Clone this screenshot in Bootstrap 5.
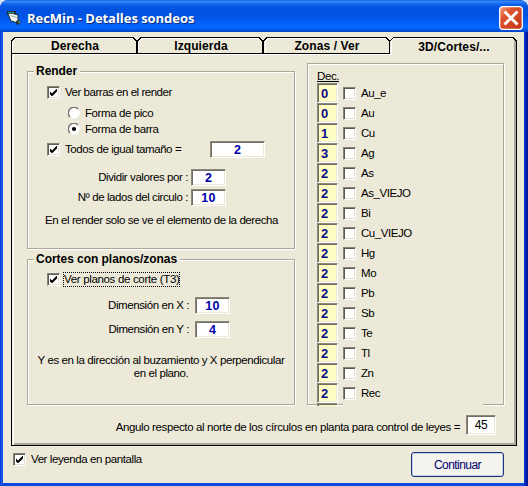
<!DOCTYPE html>
<html lang="es">
<head>
<meta charset="utf-8">
<meta name="viewport" content="width=device-width, initial-scale=1">
<title>RecMin - Detalles sondeos</title>
<link href="https://cdn.jsdelivr.net/npm/bootstrap@5.3.0/dist/css/bootstrap.min.css" rel="stylesheet">
<style>
  body { background: #d9e4f4; }
  .xp-window { width: 528px; height: 486px; border-radius: 8px 8px 0 0; padding: 0 4px 3px 3px;
    background: linear-gradient(90deg, #0831d9 0, #1f5fee 2px, #0a48e0 3px, #0a48e0 524px, #0024b8 525px, #001590 528px);
    font: 11.5px/13px "Liberation Sans", Arial, sans-serif; letter-spacing: -.41px; color: #000; }
  .xp-title { height: 32px; margin: 0 -4px 0 -3px; padding: 3px 5px 0 6px; border-radius: 8px 8px 0 0;
    background: linear-gradient(#0a4fd0 0, #3a8cf8 1px, #2173f5 3px, #0a5be8 5px, #0353e1 9px, #0054e3 16px, #0461f8 23px, #0567ff 28px, #0252dd 30px, #0346cc 32px); }
  .xp-title h1 { font: bold 13px/18px "Open Sans", "Noto Sans", sans-serif; letter-spacing: -.04px; color: #fff; text-shadow: 1px 1px 1px #0a2a80; padding-left: 5px; }
  .xp-client { height: 451px; background: #ece9d8; padding: 5px 7px 0 8px; }
  .tab-strip { height: 18px; width: 506px; }
  .tab-strip svg { position: absolute; left: 0; top: 0; }
  .tab-strip .tab-name { position: relative; width: 126px; padding: 3px 0 0 2px; text-align: center; font-weight: bold; font-size: 12px; letter-spacing: .1px; }
  .tab-strip .tab-name.current { padding: 4px 0 0 4px; }
  .tab-panel { width: 506px; height: 391px; border: solid #000; border-width: 0 1px 1px 1px; box-shadow: inset 1px 0 0 #ece9d8, inset 2px 0 0 #fff, inset -2px -2px 0 #aca899; padding-left: 15px; }
  .etched { position: relative; border: 1px solid #aca899; box-shadow: 1px 1px 0 #fff, inset 1px 1px 0 #fff; }
  .legend-text { position: absolute; left: 6px; top: -8px; padding: 0 3px 0 2px; background: #ece9d8; font-weight: bold; font-size: 12px; line-height: 15px; letter-spacing: -.04px; }
  .g-render { width: 268px; height: 178px; margin-top: 16px; padding-top: 10px; }
  .g-cortes { width: 268px; height: 146px; margin-top: 10px; padding-top: 9px; }
  .g-elem { width: 197px; height: 342px; margin: 8px 0 0 12px; padding: 6px 0 0 9px; }
  .g-elem .gap-cover { position: absolute; left: 35px; bottom: -2px; width: 140px; height: 3px; background: #ece9d8; }
  .line { height: 20px; display: flex; align-items: center; white-space: nowrap; }
  .line-sm { height: 16px; }
  .in-check { padding-left: 19px; }
  .in-radio { padding-left: 40px; }
  .in-note { padding-left: 17px; }
  .top-2 { margin-top: 2px; }
  .top-3 { margin-top: 3px; }
  .top-4 { margin-top: 4px; }
  .top-6 { margin-top: 6px; }
  .top-8 { margin-top: 8px; }
  .tag { margin-left: 5px; }
  .tag-first { letter-spacing: -.47px; }
  .tag-wide { width: 145px; }
  .box { flex: none; width: 13px; height: 13px; background: #fff; border: 1px solid; border-color: #848478 #fff #fff #848478; box-shadow: inset 1px 1px 0 #5c5b52, inset -1px -1px 0 #e4e1d2; display: block; }
  .box svg { display: block; margin: 2px 0 0 2px; }
  .field { flex: none; background: #fff; border: 1px solid; border-color: #8c897a #fff #fff #8c897a; box-shadow: inset 1px 1px 0 #716f64, inset -1px -1px 0 #ece9d8; height: 17px; width: 35px; padding-top: 1px; text-align: center; color: #0000a8; font-weight: bold; font-size: 12.5px; line-height: 15px; letter-spacing: .2px; }
  .field.wide { width: 55px; }
  .field.plain { height: 20px; width: 30px; color: #000; font-weight: normal; font-size: 12px; line-height: 16px; letter-spacing: -.4px; }
  .dec { flex: none; width: 21px; height: 20px; background: #ffffc4; border: 1px solid; border-color: #8c897a #fff #fff #8c897a; box-shadow: inset 1px 1px 0 #716f64, inset -1px -1px 0 #ece9d8; padding: 1px 0 0 3px; color: #0a0a88; font-weight: bold; font-size: 13px; line-height: 17px; }
  .dec.cut { height: 3px; border-bottom: 0; box-shadow: inset 1px 1px 0 #716f64; padding: 0; }
  .dec + .box { margin-left: 5px; }
  .el-name { padding: 1px 0 0 5px; letter-spacing: -.45px; }
  .focus-dots { outline: 1px dotted #000; letter-spacing: -.33px; }
  .lbl { text-align: right; width: 163px; padding-right: 3px; }
  .lbl.far { width: 167px; padding-right: 6px; }
  .note { margin-top: 15px; letter-spacing: -.4px; }
  .angle-row { margin: 10px 20px 0 0; }
  .angle-row .angle-text { padding: 4px 6px 0 0; letter-spacing: -.37px; }
  .bottom-bar { padding: 3px 13px 0 2px; }
  .btn-xp { width: 93px; height: 25px; margin-top: 3px; padding: 0; font-size: 12px; letter-spacing: -.55px; line-height: 22px; color: #00006c; background: #f4f3ee; border: 1px solid #1c2f7c; border-radius: 3px; box-shadow: inset 0 0 0 1px #c6d0e6; }
</style>
</head>
<body>
<svg width="0" height="0" class="position-absolute">
  <symbol id="tick" viewBox="0 0 7 7"><path d="M0 2v3l2 2 5-5V-1L2 4z" transform="translate(0 .4)" fill="#000"/></symbol>
  <symbol id="ring" viewBox="0 0 12 12"><circle cx="6" cy="6" r="5.3" fill="#fff" stroke="#fff"/><path d="M2 10A5.500 5.500 0 0 1 10 2" fill="none" stroke="#77756a" stroke-width="1.500"/></symbol>
</svg>
<main class="xp-window overflow-hidden">
  <header class="xp-title d-flex align-items-center justify-content-between">
    <div class="d-flex align-items-center">
      <svg width="16" height="16" viewBox="0 0 16 16"><path d="M1 1h9v4H1z" fill="#17323b"/><path d="M2 2h6v2H2z" fill="#20a08c"/><path d="M2 4l3-1 7 2v8l-7-2z" fill="#f4f6f6" stroke="#17323b"/><path d="M4 5l7 2v1L4 6z" fill="#9aa"/><path d="M10 11l3-1 2 2-3 3-2-1z" fill="#22333c"/><path d="M12 12l1-1 1 1-1 1z" fill="#b8bc60"/></svg>
      <h1 class="m-0">RecMin - Detalles sondeos</h1>
    </div>
    <svg width="24" height="24" viewBox="0 0 24 24"><defs><linearGradient id="xr" x2="1" y2="1"><stop offset="0" stop-color="#f0a088"/><stop offset=".3" stop-color="#e0552f"/><stop offset="1" stop-color="#bf3412"/></linearGradient></defs><rect x=".7" y=".7" width="22.6" height="22.6" rx="3" fill="url(#xr)" stroke="#fff" stroke-width="1.3"/><path d="M5.500 5.500l13 13m0-13l-13 13" stroke="#fff" stroke-width="2.900"/></svg>
  </header>

  <section class="xp-client">
    <nav class="tab-strip position-relative d-flex">
      <svg width="506" height="18" shape-rendering="crispEdges" fill="none">
        <path d="M1.500 17V4L4 1.500h118M127.500 17V4L130 1.500h118M254.500 17V4L257 1.500h119M380.500 16V4L383 1.500h118" stroke="#fff"/>
        <path d="M.5 18V4L4 .5h118l3.500 3.500V16M126.500 16V4l3.500-3.500h118l3.500 3.500V16M252.500 16V4l3.500-3.500h119l3.500 3.500V16.500H1M379 4l3.500-3.500H502l3.500 3.500V18" stroke="#000"/>
        <path d="M2 17.500h378V4" stroke="#fff"/>
        <path d="M503.500 3v15M504.500 4v14" stroke="#aca899"/>
      </svg>
      <span class="tab-name">Derecha</span><span class="tab-name">Izquierda</span><span class="tab-name">Zonas / Ver</span><span class="tab-name current">3D/Cortes/...</span>
    </nav>

    <div class="tab-panel">
      <div class="d-flex">
        <div>
          <section class="etched g-render">
            <span class="legend-text">Render</span>
            <div class="line in-check"><i class="box"><svg width="7" height="7" overflow="visible"><use href="#tick" width="7" height="7"/></svg></i><span class="tag tag-first">Ver barras en el render</span></div>
            <div class="line line-sm in-radio top-3"><svg width="12" height="12"><use href="#ring"/></svg><span class="tag">Forma de pico</span></div>
            <div class="line line-sm in-radio"><svg width="12" height="12"><use href="#ring"/><circle cx="6" cy="6" r="2.100"/></svg><span class="tag">Forma de barra</span></div>
            <div class="line in-check top-2"><i class="box"><svg width="7" height="7" overflow="visible"><use href="#tick" width="7" height="7"/></svg></i><span class="tag tag-wide">Todos de igual tamaño =</span><span class="field wide">2</span></div>
            <div class="line top-8"><span class="lbl">Dividir valores por :</span><span class="field">2</span></div>
            <div class="line"><span class="lbl">Nº de lados del circulo :</span><span class="field">10</span></div>
            <div class="line in-note top-3">En el render solo se ve el elemento de la derecha</div>
          </section>
          <section class="etched g-cortes">
            <span class="legend-text">Cortes con planos/zonas</span>
            <div class="line in-check"><i class="box"><svg width="7" height="7" overflow="visible"><use href="#tick" width="7" height="7"/></svg></i><span class="ms-1 focus-dots">Ver planos de corte (T3)</span></div>
            <div class="line top-6"><span class="lbl far">Dimensión en X :</span><span class="field">10</span></div>
            <div class="line top-4"><span class="lbl far">Dimensión en Y :</span><span class="field">4</span></div>
            <p class="note mb-0 text-center">Y es en la dirección al buzamiento y X perpendicular<br>en el plano.</p>
          </section>
        </div>
        <section class="etched g-elem">
          <span class="gap-cover"></span>
          <div class="text-decoration-underline">Dec.</div>
          <div id="elements"></div>
          <div class="dec cut"></div>
        </section>
      </div>
      <div class="angle-row d-flex align-items-center justify-content-end"><span class="angle-text text-nowrap">Angulo respecto al norte de los círculos en planta para control de leyes =</span><span class="field plain">45</span></div>
    </div>

    <footer class="bottom-bar d-flex justify-content-between">
      <div class="line"><i class="box"><svg width="7" height="7" overflow="visible"><use href="#tick" width="7" height="7"/></svg></i><span class="tag">Ver leyenda en pantalla</span></div>
      <button class="btn btn-xp" type="button">Continuar</button>
    </footer>
  </section>
</main>
<script>
  const elements = [[0,'Au_e'],[0,'Au'],[1,'Cu'],[3,'Ag'],[2,'As'],[2,'As_VIEJO'],[2,'Bi'],[2,'Cu_VIEJO'],[2,'Hg'],[2,'Mo'],[2,'Pb'],[2,'Sb'],[2,'Te'],[2,'Tl'],[2,'Zn'],[2,'Rec']];
  document.getElementById('elements').innerHTML = elements.map(([d, n]) =>
    `<div class="line"><span class="dec">${d}</span><i class="box"></i><span class="el-name">${n}</span></div>`).join('');
</script>
<script src="https://cdn.jsdelivr.net/npm/bootstrap@5.3.0/dist/js/bootstrap.bundle.min.js"></script>
</body>
</html>
